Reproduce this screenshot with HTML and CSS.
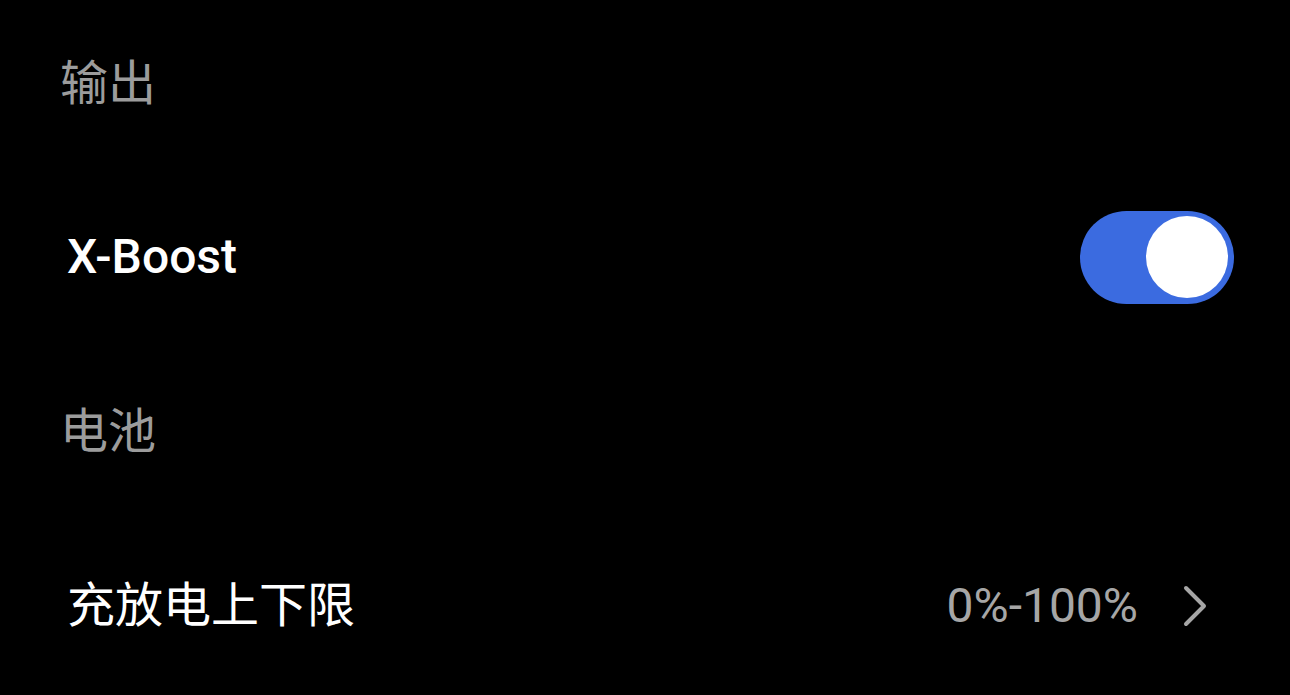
FILE: index.html
```html
<!DOCTYPE html>
<html lang="zh">
<head>
<meta charset="utf-8">
<link rel="stylesheet" href="styles.css">
</head>
<body>
<div class="page">
  <div class="header h1">输出</div>
  <div class="row r1">
    <div class="label latin">X-Boost</div>
    <div class="toggle on"><div class="knob"></div></div>
  </div>
  <div class="header h2">电池</div>
  <div class="row r2">
    <div class="label">充放电上下限</div>
    <div class="value-wrap">
      <span class="value">0%-100%</span>
      <svg class="chev" width="26" height="42" viewBox="0 0 26 42"><path d="M3 3 L21 21 L3 39" fill="none" stroke="#a6a6a6" stroke-width="4" stroke-linecap="round" stroke-linejoin="round"/></svg>
    </div>
  </div>
</div>
</body>
</html>
```

FILE: styles.css
```css
html, body {
  margin: 0;
  padding: 0;
  background: #000;
}
body {
  width: 1290px;
  height: 695px;
  overflow: hidden;
  font-family: Roboto, "Noto Sans CJK SC", sans-serif;
}
.page {
  display: flex;
  flex-direction: column;
  padding: 0 56px 0 60px;
}
.header {
  display: flex;
  align-items: center;
  color: #9c9c9c;
  font-size: 48px;
  line-height: 1;
}
.h1 { height: 168px; }
.h2 { height: 172px; }
.row {
  display: flex;
  align-items: center;
  justify-content: space-between;
}
.r1 { height: 178px; }
.r2 { height: 176px; }
.label {
  color: #fff;
  font-size: 48px;
  font-weight: 400;
  line-height: 1;
  padding-left: 7px;
}
.label.latin { font-weight: 500; }
.toggle {
  width: 154px;
  height: 93px;
  border-radius: 47px;
  background: #3b6be0;
  display: flex;
  align-items: center;
  justify-content: flex-end;
  padding: 0 6px;
  box-sizing: border-box;
}
.knob {
  width: 82px;
  height: 82px;
  border-radius: 50%;
  background: #fff;
}
.value-wrap {
  display: flex;
  align-items: center;
  gap: 45px;
  padding-right: 25px;
}
.value {
  color: #a6a6a6;
  font-size: 48px;
  line-height: 1;
}
.chev { display: block; }
```
